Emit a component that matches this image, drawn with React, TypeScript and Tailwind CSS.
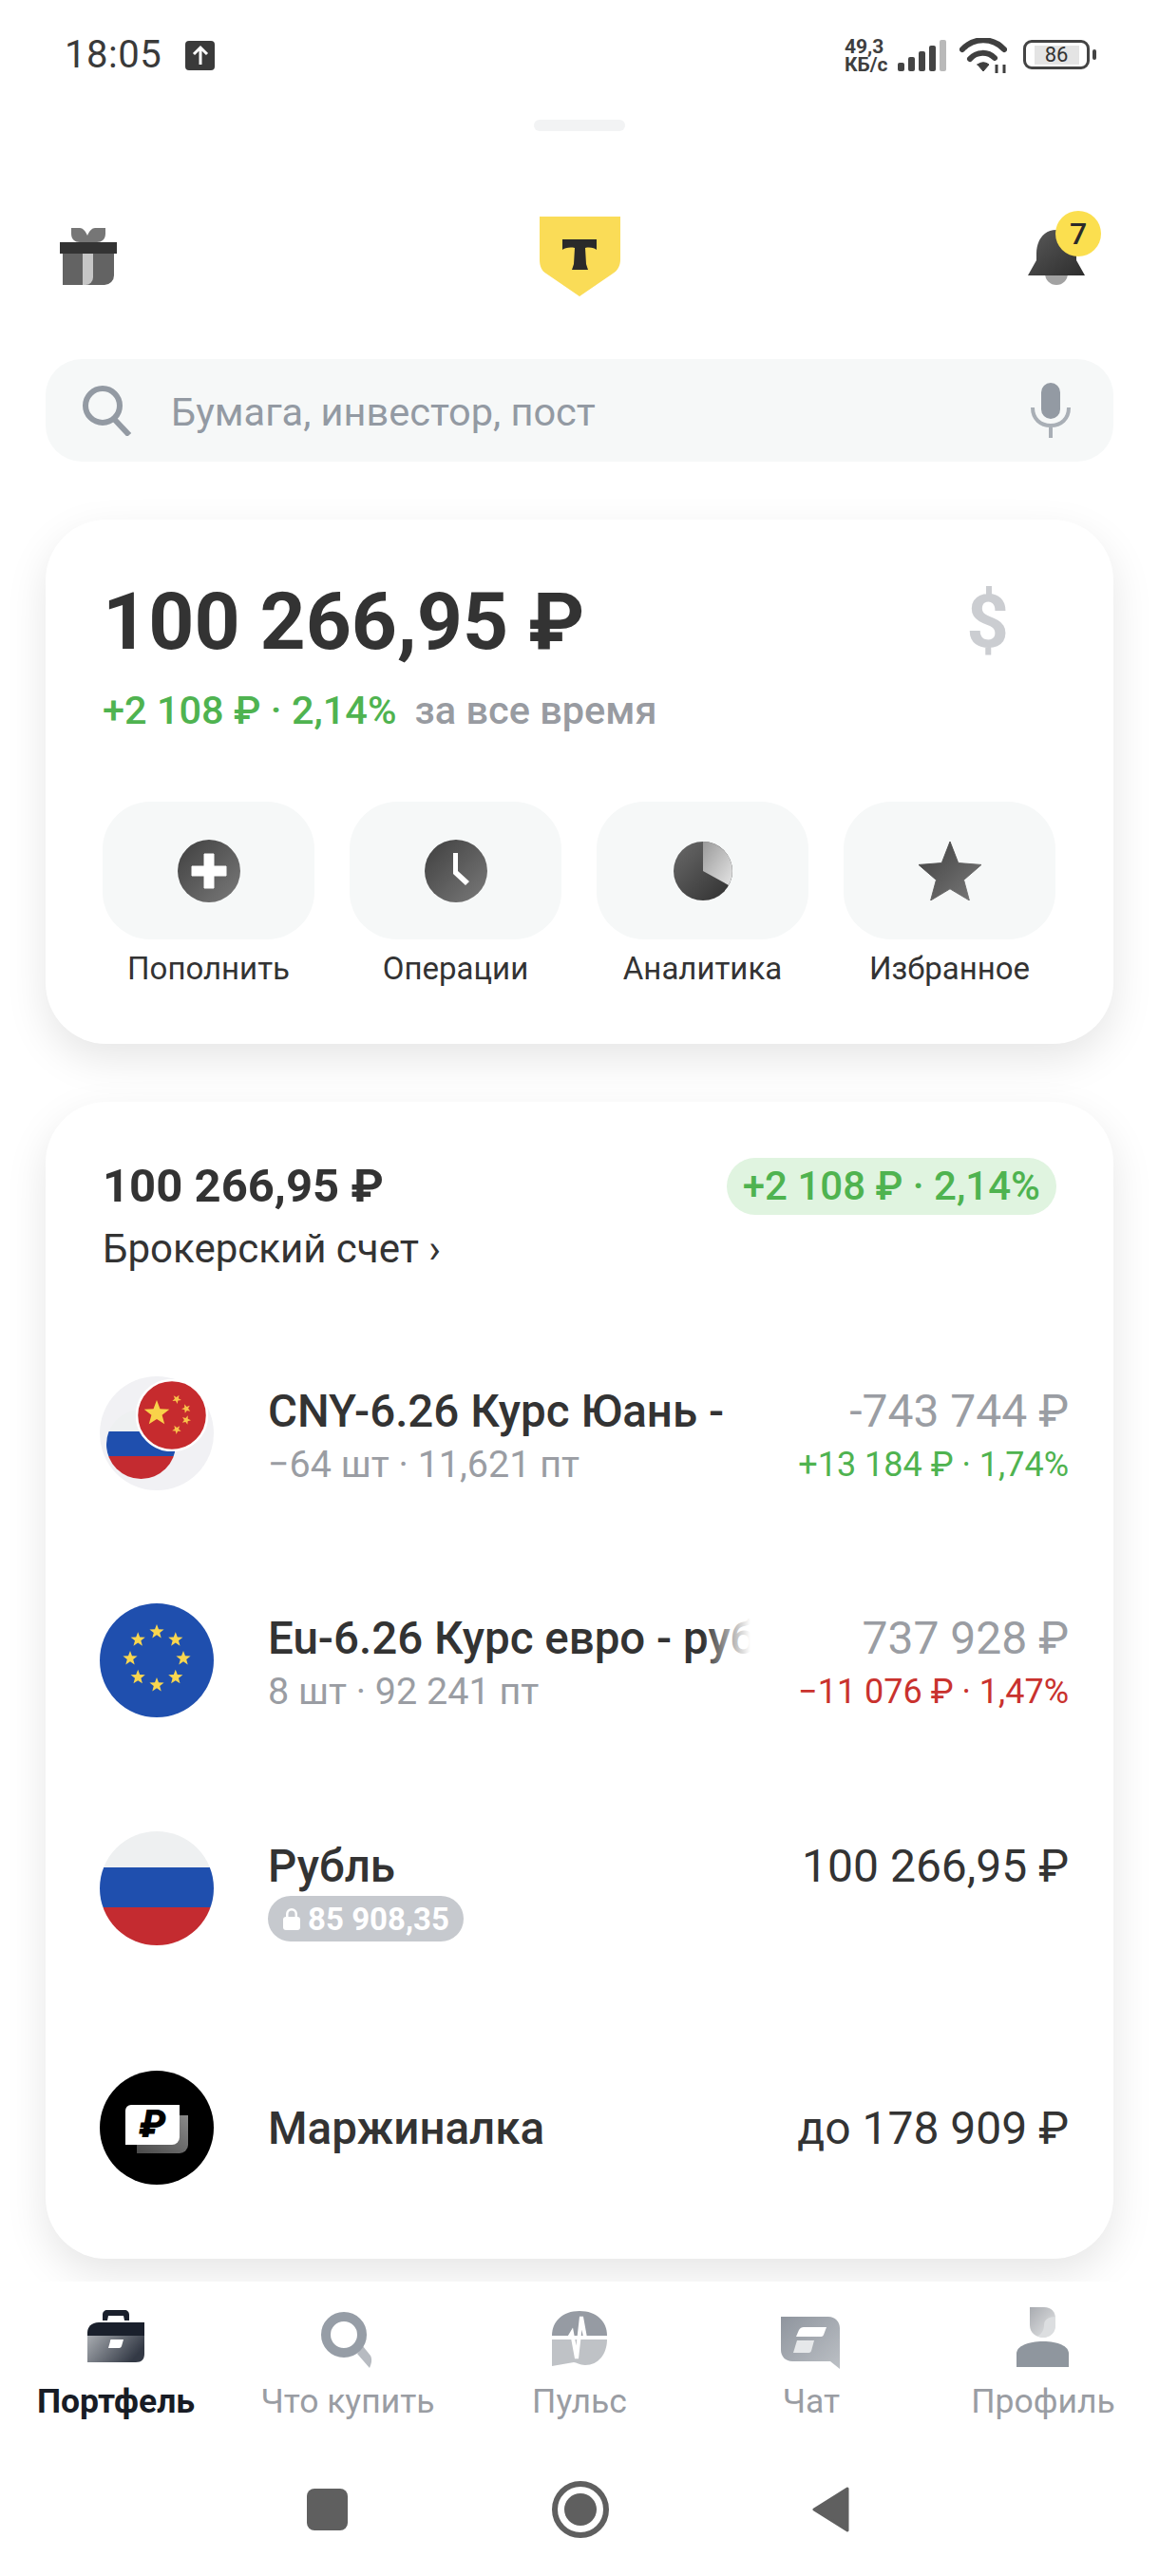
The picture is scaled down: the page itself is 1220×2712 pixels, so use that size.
import type { ReactNode } from 'react';

// builds the points of a five pointed star, used by the flags
const starPoints = (cx: number, cy: number, r: number, rot = -90) => {
  const pts: string[] = [];
  for (let i = 0; i < 10; i++) {
    const rad = i % 2 === 0 ? r : r * 0.42;
    const a = ((rot + i * 36) * Math.PI) / 180;
    pts.push(`${(cx + rad * Math.cos(a)).toFixed(2)},${(cy + rad * Math.sin(a)).toFixed(2)}`);
  }
  return pts.join(' ');
};

const StatusBar = () => (
  <div className="flex h-[126px] items-start justify-between pl-[68px] pr-[73px] pt-[40px] text-[#3a3a3a]">
    <div className="flex items-center gap-[25px]">
      <span className="text-[40px] leading-[36px] tracking-[0.5px]">18:05</span>
      <div className="flex h-[31px] w-[31px] items-center justify-center rounded-[4px] bg-[#3a3a3a]">
        <svg width="20" height="22" viewBox="0 0 20 22" fill="none" stroke="white" strokeWidth="3">
          <path d="M10 21V3M3 10l7-7 7 7" />
        </svg>
      </div>
    </div>
    <div className="flex items-start">
      <div className="w-[50px] text-[21px] font-bold leading-[19px] text-[#3f3f3f]">
        <div>49,3</div>
        <div>КБ/с</div>
      </div>
      <svg className="ml-[6px] mt-[2px]" width="52" height="33" viewBox="0 0 52 33">
        <rect x="0" y="24" width="7" height="9" rx="2" fill="#444" />
        <rect x="11" y="18" width="7" height="15" rx="2" fill="#444" />
        <rect x="22" y="12" width="7" height="21" rx="2" fill="#444" />
        <rect x="33" y="6" width="7" height="27" rx="2" fill="#444" />
        <rect x="44" y="0" width="7" height="33" rx="2" fill="#b9b9b9" />
      </svg>
      <svg className="ml-[13px]" width="50" height="38" viewBox="0 0 50 38" fill="none" stroke="#3f3f3f" strokeWidth="6" strokeLinecap="round">
        <path d="M3 12C15 -1 35 -1 47 12" />
        <path d="M11 22C18 14 30 14 37 21" />
        <path d="M19 28L25 35 31 28C27 25 23 25 19 28Z" fill="#3f3f3f" strokeWidth="1" />
        <path d="M39 37V28M47 37V28" strokeWidth="3" strokeLinecap="butt" />
      </svg>
      <div className="relative ml-[17px] mt-[2px] flex h-[31px] w-[70px] items-center justify-center rounded-[9px] border-[3px] border-[#444]">
        <div className="flex h-[20px] w-[47px] items-center justify-center bg-[#e4e4e4] text-[22px] leading-none text-[#333]">86</div>
        <div className="absolute right-[-10px] top-[7px] h-[11px] w-[4px] rounded-[2px] bg-[#444]" />
      </div>
    </div>
  </div>
);

const Header = () => (
  <div className="mt-[90px] flex h-[84px] items-center px-[63px]">
    <div className="flex-1">
      <svg width="60" height="60" viewBox="0 0 60 60">
        <path d="M12 0h9c3 0 6 3 8 8 2-5 5-8 8-8h11v6c0 6-4 9-9 9H21c-5 0-9-3-9-9z" fill="#767676" />
        <path d="M3 27h54v23a10 10 0 0 1-10 10H3z" fill="#636363" />
        <path d="M24 27h11v25a8 8 0 0 1-8 8h-3z" fill="#c6c6c6" />
        <rect x="0" y="15" width="60" height="12" fill="#333" />
      </svg>
    </div>
    <svg width="86" height="84" viewBox="0 0 86 84">
      <path d="M1 0H86V45C86 52 83 57 78 60L43 84 8 60C3 57 1 52 1 45Z" fill="#fadc57" />
      <path d="M25 24H61V35C59 33 54 32 49 33L50 50 52 56H35L37 50 38 33C33 32 27 33 25 35Z" fill="#2a2a2a" />
    </svg>
    <div className="flex flex-1 justify-end">
      <div className="relative mr-[15px] h-[60px] w-[60px]">
        <svg width="60" height="60" viewBox="0 0 60 60">
          <defs>
            <linearGradient id="bellG" x1="0" y1="0" x2="1" y2="1">
              <stop offset="0" stopColor="#5a5a5a" />
              <stop offset="1" stopColor="#2d2d2d" />
            </linearGradient>
          </defs>
          <circle cx="30" cy="48" r="12" fill="#a2a2a2" />
          <path d="M30 2C16 2 9 14 9 27v7L0 50h60l-9-16v-7C51 14 44 2 30 2z" fill="url(#bellG)" />
        </svg>
        <div className="absolute right-[-17px] top-[-18px] flex h-[48px] w-[48px] items-center justify-center rounded-full bg-[#fbdf4f] text-[32px] font-medium leading-none text-[#2a2a2a]">
          7
        </div>
      </div>
    </div>
  </div>
);

const SearchBox = () => (
  <div className="mx-[48px] mt-[66px] flex h-[108px] items-center rounded-[38px] bg-[#f6f8f8] pl-[38px] pr-[45px]">
    <svg width="54" height="54" viewBox="0 0 54 54" fill="none" stroke="#939aa3" strokeWidth="6">
      <circle cx="22" cy="22" r="18" />
      <path d="M34 36l16 17" strokeWidth="6" />
    </svg>
    <span className="ml-[40px] flex-1 pt-[4px] text-[41.5px] leading-[48px] text-[#939aa3]">Бумага, инвестор, пост</span>
    <svg width="42" height="58" viewBox="0 0 42 58">
      <rect x="11" y="0" width="20" height="38" rx="10" fill="#939aa3" />
      <path d="M2 26c0 12 8 19 19 19s19-7 19-19M21 45v13" fill="none" stroke="#a9afb6" strokeWidth="4" />
    </svg>
  </div>
);

const TileGradient = ({ id }: { id: string }) => (
  <defs>
    <linearGradient id={id} x1="0" y1="0" x2="1" y2="1">
      <stop offset="0" stopColor="#3f3f3f" />
      <stop offset="1" stopColor="#7a7a7a" />
    </linearGradient>
  </defs>
);

const ACTIONS: { label: string; icon: ReactNode }[] = [
  {
    label: 'Пополнить',
    icon: (
      <svg width="66" height="66" viewBox="0 0 66 66">
        <TileGradient id="tilePlus" />
        <circle cx="33" cy="33" r="33" fill="url(#tilePlus)" />
        <path d="M28 15h10v13h13v10H38v13H28V38H15V28h13z" fill="white" stroke="white" strokeLinejoin="round" strokeWidth="1" />
      </svg>
    ),
  },
  {
    label: 'Операции',
    icon: (
      <svg width="66" height="66" viewBox="0 0 66 66">
        <TileGradient id="tileClock" />
        <circle cx="33" cy="33" r="33" fill="url(#tileClock)" />
        <path d="M30 14h5v19l12 11-4 4-13-12z" fill="white" />
      </svg>
    ),
  },
  {
    label: 'Аналитика',
    icon: (
      <svg width="66" height="66" viewBox="0 0 66 66">
        <defs>
          <linearGradient id="pieDark" x1="0" y1="0" x2="1" y2="1">
            <stop offset="0" stopColor="#6a6a6a" />
            <stop offset="1" stopColor="#2f2f2f" />
          </linearGradient>
          <linearGradient id="pieLight" x1="0" y1="0" x2="1" y2="1">
            <stop offset="0" stopColor="#9a9a9a" />
            <stop offset="1" stopColor="#e4e4e4" />
          </linearGradient>
        </defs>
        <circle cx="33" cy="33" r="31" fill="url(#pieDark)" />
        <path d="M33 2a31 31 0 0 1 27 46L33 33z" fill="url(#pieLight)" />
      </svg>
    ),
  },
  {
    label: 'Избранное',
    icon: (
      <svg width="66" height="62" viewBox="0 0 68 66" preserveAspectRatio="none">
        <TileGradient id="tileStar" />
        <path d="M34 0l9 24 25 2-19 17 6 23-21-13-21 13 6-23L0 26l25-2z" fill="url(#tileStar)" stroke="url(#tileStar)" strokeLinejoin="round" />
      </svg>
    ),
  },
];

const TotalCard = () => (
  <div className="mx-[48px] mt-[61px] h-[552px] rounded-[64px] bg-white pl-[60px] pr-[61px] pt-[58px] shadow-[0_16px_44px_rgba(0,0,0,0.1)]">
    <div className="flex items-center justify-between">
      <span className="text-[84px] font-bold leading-[100px] text-[#333]">100 266,95 ₽</span>
      <span className="mr-[49px] text-[78px] font-bold leading-[100px] text-[#cbcdd1]">$</span>
    </div>
    <div className="mt-[18px] flex h-[50px] items-center text-[41.5px] font-medium leading-[50px]">
      <span className="text-[#4fb350]">+2 108 ₽ · 2,14%</span>
      <span className="ml-[19px] text-[#989ba1]">за все время</span>
    </div>
    <div className="mt-[71px] grid grid-cols-4 gap-[37px]">
      {ACTIONS.map((a) => (
        <div key={a.label} className="flex flex-col items-center">
          <div className="flex h-[145px] w-full items-center justify-center rounded-[50px] bg-[#f6f8f8]">{a.icon}</div>
          <span className="mt-[11px] whitespace-nowrap text-[33px] leading-[40px] text-[#333]">{a.label}</span>
        </div>
      ))}
    </div>
  </div>
);

const RuFlag = () => (
  <div className="flex h-full w-full flex-col overflow-hidden rounded-full">
    <div className="h-[32%] bg-[#eef0f1]" />
    <div className="h-[35%] bg-[#1f4fae]" />
    <div className="flex-1 bg-[#c42b30]" />
  </div>
);

const PairIcon = () => (
  <div className="relative h-[120px] w-[120px] rounded-full bg-[#f1f1f4]">
    <div className="absolute left-[7px] top-[35px] h-[73px] w-[73px]">
      <RuFlag />
    </div>
    <svg className="absolute left-[38px] top-[3px]" width="76" height="76" viewBox="0 0 76 76">
      <circle cx="38" cy="38" r="37" fill="#c62b2e" stroke="white" strokeWidth="2.5" />
      <polygon points={starPoints(22, 36, 14)} fill="#f8d24a" />
      <polygon points={starPoints(43, 21, 5, -60)} fill="#f8c24a" />
      <polygon points={starPoints(53, 31, 5, -40)} fill="#f8c24a" />
      <polygon points={starPoints(53, 43, 5, -70)} fill="#f8c24a" />
      <polygon points={starPoints(43, 53, 5, -50)} fill="#f8c24a" />
    </svg>
  </div>
);

const EuIcon = () => (
  <svg width="120" height="120" viewBox="0 0 120 120">
    <circle cx="60" cy="60" r="60" fill="#1f4fae" />
    {Array.from({ length: 8 }).map((_, i) => {
      const a = (i * 45 * Math.PI) / 180 - Math.PI / 2;
      return <polygon key={i} points={starPoints(60 + 28 * Math.cos(a), 58 + 28 * Math.sin(a), 8)} fill="#f9d64f" />;
    })}
  </svg>
);

const MarginIcon = () => (
  <div className="relative h-[120px] w-[120px] shrink-0 rounded-full bg-black">
    <div className="absolute left-[39px] top-[47px] h-[40px] w-[54px] rounded-br-[9px] bg-gradient-to-tr from-[#4a4a4a] to-[#8a8a8a]" />
    <div className="absolute left-[27px] top-[36px] flex h-[42px] w-[57px] items-center justify-center rounded-br-[8px] rounded-tl-[6px] bg-white text-[40px] font-black italic leading-none text-black">
      ₽
    </div>
  </div>
);

const PositionRow = ({
  icon,
  title,
  sub,
  value,
  change,
  fade,
  valueClass = 'text-[#333]',
  changeClass = '',
  className = '',
}: {
  icon: ReactNode;
  title: string;
  sub?: ReactNode;
  value: string;
  change?: string;
  fade?: boolean;
  valueClass?: string;
  changeClass?: string;
  className?: string;
}) => (
  <div className={`flex h-[120px] pl-[57px] pr-[47px] ${className}`}>
    <div className="h-[120px] w-[120px] shrink-0">{icon}</div>
    <div className="ml-[57px] min-w-0 flex-1 pt-[10px]">
      <div className="relative w-[508px] overflow-hidden whitespace-nowrap text-[47.5px] font-medium leading-[54px] text-[#333]">
        {title}
        {fade && <div className="absolute bottom-0 right-0 top-0 w-[50px] bg-gradient-to-r from-white/0 to-white" />}
      </div>
      {sub}
    </div>
    <div className="flex shrink-0 flex-col items-end pt-[10px]">
      <span className={`whitespace-nowrap text-[48px] leading-[54px] ${valueClass}`}>{value}</span>
      {change && <span className={`mt-[6px] whitespace-nowrap text-[36px] leading-[46px] ${changeClass}`}>{change}</span>}
    </div>
  </div>
);

const SubLine = ({ children }: { children: ReactNode }) => (
  <div className="mt-[6px] text-[39.5px] leading-[46px] text-[#9a9da3]">{children}</div>
);

const AccountCard = () => (
  <div className="mx-[48px] mt-[61px] h-[1218px] rounded-[64px] bg-white pt-[59px] shadow-[0_16px_44px_rgba(0,0,0,0.1)]">
    <div className="flex items-start justify-between pl-[60px] pr-[60px]">
      <span className="text-[49px] font-bold leading-[60px] text-[#333]">100 266,95 ₽</span>
      <span className="flex h-[60px] items-center rounded-[30px] bg-[#e0f4e0] px-[17px] text-[42px] font-medium leading-none text-[#4fb350]">
        +2 108 ₽ · 2,14%
      </span>
    </div>
    <div className="mt-[12px] pl-[60px] text-[42px] leading-[48px] text-[#333]">Брокерский счет ›</div>
    <div className="mt-[110px]">
      <PositionRow
        icon={<PairIcon />}
        title="CNY-6.26 Курс Юань -"
        sub={<SubLine>−64 шт · 11,621 пт</SubLine>}
        value="-743 744 ₽"
        valueClass="text-[#9a9da3]"
        change="+13 184 ₽ · 1,74%"
        changeClass="text-[#4fb350]"
      />
      <PositionRow
        className="mt-[119px]"
        icon={<EuIcon />}
        title="Eu-6.26 Курс евро - рубль"
        fade
        sub={<SubLine>8 шт · 92 241 пт</SubLine>}
        value="737 928 ₽"
        valueClass="text-[#9a9da3]"
        change="−11 076 ₽ · 1,47%"
        changeClass="text-[#c9322e]"
      />
      <PositionRow
        className="mt-[120px]"
        icon={<RuFlag />}
        title="Рубль"
        sub={
          <div className="mt-[4px] flex h-[48px] w-[206px] items-center justify-center gap-[7px] rounded-[24px] bg-[#c6c9ce] text-[33px] font-bold leading-none text-white">
            <svg width="20" height="24" viewBox="0 0 20 24" fill="white">
              <path d="M4 11V7a6 6 0 0 1 12 0v4h-2.500V7a3.500 3.500 0 0 0-7 0v4z" />
              <rect x="1" y="10" width="18" height="14" rx="3" />
            </svg>
            85 908,35
          </div>
        }
        value="100 266,95 ₽"
      />
      <div className="mt-[132px] flex h-[120px] items-center pl-[57px] pr-[47px]">
        <MarginIcon />
        <span className="ml-[57px] flex-1 pt-[2px] text-[47.5px] font-medium leading-[54px] text-[#333]">Маржиналка</span>
        <span className="pt-[2px] text-[48px] leading-[54px] text-[#333]">до 178 909 ₽</span>
      </div>
    </div>
  </div>
);

const NAV_ITEMS: { label: string; active?: boolean; icon: ReactNode }[] = [
  {
    label: 'Портфель',
    active: true,
    icon: (
      <svg width="72" height="72" viewBox="0 0 72 72">
        <defs>
          <linearGradient id="navCase" x1="0" y1="0" x2="1" y2="0.4">
            <stop offset="0" stopColor="#a8acb1" />
            <stop offset="1" stopColor="#333945" />
          </linearGradient>
        </defs>
        <path d="M22 17V11C22 8 24 6 27 6H45C48 6 50 8 50 11V17H45L44 12H28L27 17Z" fill="#1a202c" />
        <path d="M6 33V30C6 24 10 19 18 19H66V33Z" fill="#1a202c" />
        <path d="M6 33H66V52C66 58 63 61 57 61H6Z" fill="url(#navCase)" />
        <path d="M31 37H44L42 44C41 46 40 46 38 46H28L30 39C30 38 30 37 31 37Z" fill="white" />
      </svg>
    ),
  },
  {
    label: 'Что купить',
    icon: (
      <svg width="72" height="72" viewBox="0 0 72 72" fill="none">
        <path d="M52 44L60 54C62 58 61 62 59 67L46 52Z" fill="#b7bbc1" />
        <circle cx="32" cy="32" r="19" stroke="#969da6" strokeWidth="10" />
      </svg>
    ),
  },
  {
    label: 'Пульс',
    icon: (
      <svg width="72" height="72" viewBox="0 0 72 72" fill="none">
        <path d="M7 33C7 18 18 7 36 7C54 7 65 18 65 33Z" fill="#969ba3" />
        <path d="M7 37H65C65 52 56 64 42 64C36 64 33 61 30 61L7 65Z" fill="#bfc2c6" />
        <path d="M5 35H25L28 30L33 57L38 13L42 35H68" stroke="white" strokeWidth="4" />
      </svg>
    ),
  },
  {
    label: 'Чат',
    icon: (
      <svg width="72" height="72" viewBox="0 0 72 72">
        <defs>
          <linearGradient id="navChat" x1="0" y1="0" x2="1" y2="1">
            <stop offset="0" stopColor="#8f959e" />
            <stop offset="1" stopColor="#bcc0c5" />
          </linearGradient>
        </defs>
        <path d="M4 13h50c7 0 12 5 12 12v43L56 60H16C9 60 4 55 4 48z" fill="url(#navChat)" />
        <path d="M23 27c1-2 3-3 5-3h24l-3 8c-1 2-2 2-4 2H20z" fill="white" />
        <path d="M21 38h18l-3 11c-1 2-2 2-4 2H17z" fill="#e6e8ea" />
      </svg>
    ),
  },
  {
    label: 'Профиль',
    icon: (
      <svg width="72" height="72" viewBox="0 0 72 72">
        <defs>
          <linearGradient id="navHead" x1="0" y1="0" x2="1" y2="1">
            <stop offset="0" stopColor="#a8abb0" />
            <stop offset="1" stopColor="#e6e7e8" />
          </linearGradient>
        </defs>
        <path d="M22 3H37C45 3 49 8 49 15V22C49 30 43 35 36 35S22 30 22 22Z" fill="url(#navHead)" />
        <path d="M49 13C42 13 37 16 37 22C37 28 33 33 30 33C32 34 34 35 36 35C43 35 49 30 49 22Z" fill="#dcdee0" />
        <path d="M8 66V52C8 44 20 39 36 39S63 44 63 52V66Z" fill="#8f969e" />
      </svg>
    ),
  },
];

const BottomNav = () => (
  <div className="relative mt-[24px] h-[310px] bg-white">
    <div className="grid grid-cols-5 pt-[24px]">
      {NAV_ITEMS.map((item) => (
        <div key={item.label} className="flex flex-col items-center">
          {item.icon}
          <span
            className={`mt-[8px] whitespace-nowrap text-[35.5px] leading-[44px] ${
              item.active ? 'font-bold text-[#181c25]' : 'text-[#9a9da3]'
            }`}
          >
            {item.label}
          </span>
        </div>
      ))}
    </div>
    <div className="mt-[60px] flex h-[64px] items-center pl-[323px]">
      <div className="h-[44px] w-[43px] rounded-[8px] bg-[#5f5f5f]" />
      <div className="ml-[215px] flex h-[60px] w-[60px] items-center justify-center rounded-full border-[6px] border-[#5f5f5f]">
        <div className="h-[34px] w-[34px] rounded-full bg-[#5f5f5f]" />
      </div>
      <svg className="ml-[214px]" width="40" height="48" viewBox="0 0 40 48">
        <path d="M37 2L2 24l35 22z" fill="#5f5f5f" stroke="#5f5f5f" strokeWidth="3" strokeLinejoin="round" />
      </svg>
    </div>
  </div>
);

const App = () => (
  <div className="h-[2712px] w-[1220px] overflow-hidden bg-white font-['Roboto',sans-serif]">
    <StatusBar />
    <div className="mx-auto h-[12px] w-[96px] rounded-full bg-[#f2f3f4]" />
    <Header />
    <SearchBox />
    <TotalCard />
    <AccountCard />
    <BottomNav />
  </div>
);

export default App;
